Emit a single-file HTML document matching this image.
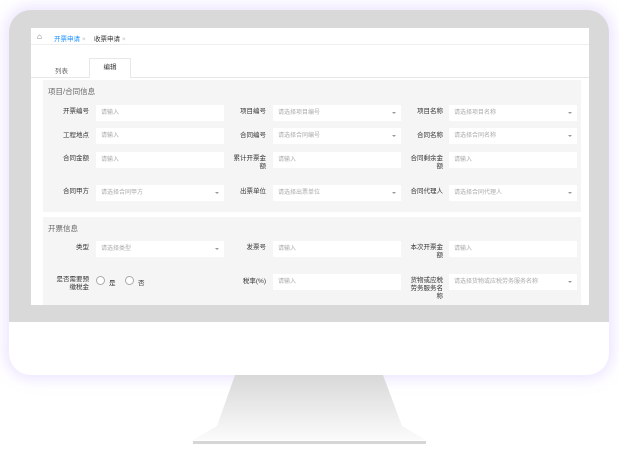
<!DOCTYPE html><html><head><meta charset="utf-8"><style>
*{margin:0;padding:0;box-sizing:border-box}
body{width:619px;height:451px;background:#fff;position:relative;overflow:hidden;font-family:"Liberation Sans","Noto Sans CJK SC",sans-serif;font-size:6.5px;color:#333}
.abs{position:absolute}
.mon{left:9px;top:10px;width:600px;height:365px;border-radius:22px;background:#fff;box-shadow:0 0 14px 4px rgba(200,180,255,.35);overflow:hidden}
.bez{left:0;top:0;width:600px;height:312px;background:#d9d9d9}
.scr{left:22px;top:18px;width:558px;height:277px;background:#fff;overflow:hidden}
.sec{background:#f5f5f5;position:absolute;left:12px;width:538px}
.lbl{position:absolute;text-align:right;width:46px;color:#333;line-height:8px}
.inp{position:absolute;background:#fff;height:16px;width:128px;color:#aaa;padding-left:5px;line-height:16px;font-size:6px}
.sel:after{content:"";position:absolute;right:5px;top:7px;border:2px solid transparent;border-top-color:#999}
.h{position:absolute;left:5px;font-size:7.5px;color:#666}
</style></head><body>
<div class="abs mon">
 <div class="abs bez"></div>
 <div class="abs scr">
  <div class="abs" style="left:0;top:0;width:558px;height:17px;border-bottom:1px solid #eee"></div>
  <div class="abs" style="left:6px;top:4px;font-size:8px;color:#666">⌂</div>
  <div class="abs" style="left:23px;top:5px;color:#1890ff">开票申请 <span style="color:#bbb">×</span></div>
  <div class="abs" style="left:63px;top:5px;color:#333">收票申请 <span style="color:#bbb">×</span></div>
  <div class="abs" style="left:0;top:49px;width:558px;border-top:1px solid #e8e8e8"></div>
  <div class="abs" style="left:24px;top:37px;color:#666">列表</div>
  <div class="abs" style="left:58px;top:30px;width:42px;height:20px;background:#fff;border:1px solid #e8e8e8;border-bottom:none;text-align:center;line-height:18px">编辑</div>
  <div class="sec" style="top:52px;height:132px">
   <div class="h" style="top:6px">项目/合同信息</div>
  </div>
  <div class="sec" style="top:189px;height:90px">
   <div class="h" style="top:6px">开票信息</div>
  </div>
  <!-- row1 -->
  <div class="lbl" style="left:12px;top:80px">开票编号</div><div class="inp" style="left:65px;top:77px">请输入</div>
  <div class="lbl" style="left:189px;top:80px">项目编号</div><div class="inp sel" style="left:242px;top:77px">请选择项目编号</div>
  <div class="lbl" style="left:366px;top:80px">项目名称</div><div class="inp sel" style="left:418px;top:77px">请选择项目名称</div>
  <div class="lbl" style="left:12px;top:104px">工程地点</div><div class="inp" style="left:65px;top:100px">请输入</div>
  <div class="lbl" style="left:189px;top:104px">合同编号</div><div class="inp sel" style="left:242px;top:100px">请选择合同编号</div>
  <div class="lbl" style="left:366px;top:104px">合同名称</div><div class="inp sel" style="left:418px;top:100px">请选择合同名称</div>
  <div class="lbl" style="left:12px;top:127px">合同金额</div><div class="inp" style="left:65px;top:124px">请输入</div>
  <div class="lbl" style="left:189px;top:127px">累计开票金<br>额</div><div class="inp" style="left:242px;top:124px">请输入</div>
  <div class="lbl" style="left:366px;top:127px">合同剩余金<br>额</div><div class="inp" style="left:418px;top:124px">请输入</div>
  <div class="lbl" style="left:12px;top:160px">合同甲方</div><div class="inp sel" style="left:65px;top:157px">请选择合同甲方</div>
  <div class="lbl" style="left:189px;top:160px">出票单位</div><div class="inp sel" style="left:242px;top:157px">请选择出票单位</div>
  <div class="lbl" style="left:366px;top:160px">合同代理人</div><div class="inp sel" style="left:418px;top:157px">请选择合同代理人</div>
  <!-- section2 -->
  <div class="lbl" style="left:12px;top:216px">类型</div><div class="inp sel" style="left:65px;top:213px">请选择类型</div>
  <div class="lbl" style="left:189px;top:216px">发票号</div><div class="inp" style="left:242px;top:213px">请输入</div>
  <div class="lbl" style="left:366px;top:216px">本次开票金<br>额</div><div class="inp" style="left:418px;top:213px">请输入</div>
  <div class="lbl" style="left:12px;top:248px">是否需要预<br>缴税金</div>
  <div class="abs" style="left:65px;top:248px;width:9px;height:9px;border:1px solid #aaa;border-radius:50%;background:#fff"></div>
  <div class="abs" style="left:78px;top:249px">是</div>
  <div class="abs" style="left:94px;top:248px;width:9px;height:9px;border:1px solid #aaa;border-radius:50%;background:#fff"></div>
  <div class="abs" style="left:107px;top:249px">否</div>
  <div class="lbl" style="left:189px;top:250px">税率(%)</div><div class="inp" style="left:242px;top:246px">请输入</div>
  <div class="lbl" style="left:366px;top:249px">货物或应税<br>劳务服务名<br>称</div><div class="inp sel" style="left:418px;top:246px">请选择货物或应税劳务服务名称</div>
 </div>
</div>
<svg class="abs" style="left:0;top:0" width="619" height="451">
 <defs><linearGradient id="g" x1="0" y1="0" x2="0" y2="1"><stop offset="0" stop-color="#d8d8d8"/><stop offset="1" stop-color="#fbfbfb"/></linearGradient></defs>
 <polygon points="235,375 383,375 402,426 426,440 193,440 217,426" fill="url(#g)"/>
 <rect x="193" y="441" width="233" height="3" fill="#d6d6d6"/>
</svg>
</body></html>
